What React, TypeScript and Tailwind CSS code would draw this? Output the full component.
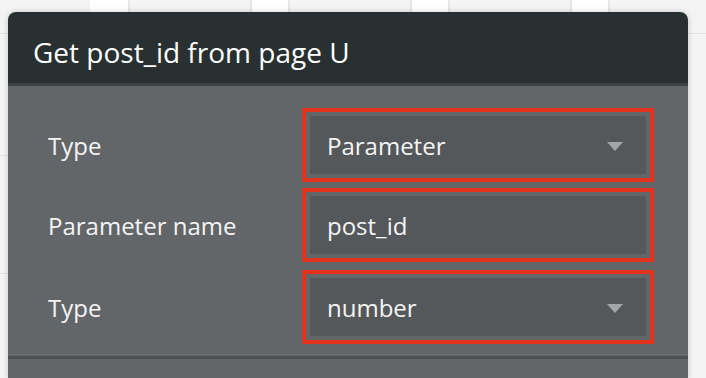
import React from "react";

function Arrow() {
  return (
    <svg width="16" height="9" viewBox="0 0 16 9" className="shrink-0">
      <polygon points="0,0 16,0 8,9" fill="#a3a6a9" />
    </svg>
  );
}

function Field({ value, dropdown }: { value: string; dropdown?: boolean }) {
  return (
    <div className="w-[352px] h-[74px] border-[4px] border-[#e0321d] p-[4px]">
      <div className="h-full bg-[#54585b] flex items-center justify-between pl-[17px] pr-[23px] pt-[2px] text-[24px] text-[#f4f4f4]">
        <span>{value}</span>
        {dropdown && <Arrow />}
      </div>
    </div>
  );
}

function Row({ label, value, dropdown, className }: { label: string; value: string; dropdown?: boolean; className?: string }) {
  return (
    <div className={"flex items-center " + (className ?? "")}>
      <div className="w-[294px] pl-[40px] pt-[2px] text-[24px] text-[#f4f4f4] shrink-0">{label}</div>
      <Field value={value} dropdown={dropdown} />
    </div>
  );
}

export default function App() {
  return (
    <div className="relative w-[706px] h-[378px] overflow-hidden bg-[#f4f4f4] font-['Open_Sans',sans-serif]">
      {/* background canvas */}
      <div className="absolute inset-0 flex flex-col">
        <div className="flex h-[12px] pl-[90px] gap-[120px]">
          <div className="w-[40px] bg-white border-r-2 border-[#e6e6e6]" />
          <div className="w-[40px] bg-white border-x-2 border-[#e6e6e6]" />
          <div className="w-[40px] bg-white border-x-2 border-[#e6e6e6]" />
          <div className="w-[40px] bg-white border-x-2 border-[#e6e6e6]" />
        </div>
        <div className="mt-[21px] h-px bg-[#e4e4e4]" />
        <div className="mt-[121px] w-[10px] h-px bg-[#e4e4e4]" />
        <div className="mt-[117px] w-[10px] h-px bg-[#e4e4e4]" />
      </div>

      <div className="relative ml-[8px] mt-[12px] w-[680px] rounded-t-[8px] overflow-hidden shadow-[0_0_6px_rgba(0,0,0,0.18)]">
        <div className="h-[71px] bg-[#283032] flex items-center pl-[25px] pt-[8px] text-[28px] text-white">
          Get post_id from page U
        </div>
        <div className="h-[3px] bg-[#3b4144]" />
        <div className="bg-[#636669] pt-[22px] pb-[20px]">
          <Row label="Type" value="Parameter" dropdown />
          <Row label="Parameter name" value="post_id" className="mt-[6px]" />
          <Row label="Type" value="number" dropdown className="mt-[8px]" />
          <div className="mt-[10px] h-px bg-[#6d7073]" />
          <div className="mt-px h-[3px] bg-[#4c5053]" />
        </div>
      </div>
    </div>
  );
}
